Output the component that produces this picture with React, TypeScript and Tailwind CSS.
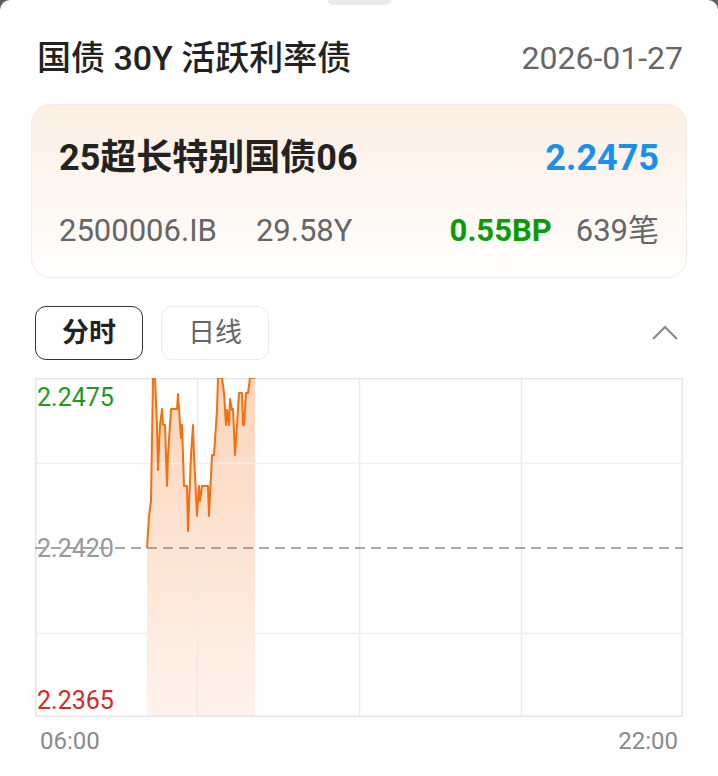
import React from 'react';

// price line, in chart coords (648 x 339)
const LINE: Array<[number, number]> = [
  [112, 170], [114, 138], [116, 123], [118, 0], [120, 0], [122, 47], [123, 92], [125, 47],
  [127, 31], [128, 47], [130, 47], [132, 108], [133, 77], [136, 31], [142, 31], [143, 16],
  [144, 31], [146, 60], [147, 47], [149, 108], [152, 108], [153, 153], [156, 77], [158, 47],
  [159, 77], [162, 138], [164, 108], [165, 123], [167, 108], [173, 108], [174, 138], [177, 77],
  [179, 77], [182, 32], [183, 0], [187, 0], [189, 15], [191, 47], [192, 32], [194, 47],
  [195, 21], [197, 32], [198, 31], [200, 77], [202, 47], [204, 15], [207, 15], [208, 47],
  [209, 47], [211, 15], [213, 15], [215, 0], [220, 0],
];

const W = 648;
const H = 339;

function Chart() {
  const pts = LINE.map(([x, y]) => `${x},${y}`).join(' ');
  const area = `${LINE[0][0]},${H} ${pts} ${LINE[LINE.length - 1][0]},${H}`;

  return (
    <div className="relative mx-[4px] h-[339px]">
      <svg width={W} height={H} className="absolute inset-0">
        <defs>
          <linearGradient id="fill" x1="0" y1="0" x2="0" y2="1">
            <stop offset="0%" stopColor="#fbd5bb" />
            <stop offset="100%" stopColor="#fff3ec" />
          </linearGradient>
        </defs>
        <polygon points={area} fill="url(#fill)" />
        {/* grid */}
        {[162, 324, 486].map((x) => (
          <line key={x} x1={x + 0.5} y1={0} x2={x + 0.5} y2={H} stroke="#ebebeb" strokeWidth="1.5" />
        ))}
        {[85, 255].map((y) => (
          <line key={y} x1={0} y1={y + 0.5} x2={W} y2={y + 0.5} stroke="#efefef" strokeWidth="1.5" />
        ))}
        <rect x={0.75} y={0.75} width={W - 1.5} height={H - 1.5} fill="none" stroke="#e6e6e6" strokeWidth="1.5" />
        <polyline points={pts} fill="none" stroke="#f2700f" strokeWidth="2" strokeLinejoin="round" />
        <line x1={0} y1={170} x2={W} y2={170} stroke="#8a8a8a" strokeWidth="1.5" strokeDasharray="10 6" />
      </svg>
      <div className="absolute left-[2px] top-[5px] text-[25px] leading-[30px] text-[#1c9a1c]">2.2475</div>
      <div className="absolute left-[2px] top-[156px] text-[25px] leading-[30px] text-[#999999]">2.2420</div>
      <div className="absolute left-[2px] top-[308px] text-[25px] leading-[30px] text-[#d12a2a]">2.2365</div>
    </div>
  );
}

export default function App() {
  return (
    <div className="h-[776px] w-[718px] bg-[#5f5f5f] font-['Roboto','Noto_Sans_CJK_SC',sans-serif]">
      <div className="flex h-full flex-col rounded-t-[10px] bg-white px-[31px]">
        <div className="flex justify-center">
          <div className="h-[5px] w-[63px] rounded-b-[5px] bg-[#ebebeb]" />
        </div>

        {/* header */}
        <div className="mt-[33px] flex items-center justify-between px-[6px] pr-[4px]">
          <span className="text-[34px] leading-[40px] font-medium text-[#222222]">国债 30Y 活跃利率债</span>
          <span className="text-[32px] leading-[40px] text-[#666666]">2026-01-27</span>
        </div>

        {/* bond card */}
        <div className="mt-[26px] h-[174px] rounded-[20px] border border-[#f0ece8] bg-gradient-to-b from-[#fdefe3] to-[#fffefd] px-[27px] pt-[31px]">
          <div className="flex items-center justify-between">
            <span className="text-[36px] leading-[44px] font-bold text-[#222222]">25超长特别国债06</span>
            <span className="text-[36px] leading-[44px] font-bold text-[#1890f0]">2.2475</span>
          </div>
          <div className="mt-[31px] flex items-center justify-between">
            <div className="flex items-center gap-[39px] text-[31px] leading-[40px] text-[#666666]">
              <span>2500006.IB</span>
              <span>29.58Y</span>
            </div>
            <div className="flex items-center gap-[24px] text-[31px] leading-[40px]">
              <span className="font-bold text-[#0b9a0b]">0.55BP</span>
              <span className="text-[#666666]">639笔</span>
            </div>
          </div>
        </div>

        {/* tabs */}
        <div className="mt-[28px] flex items-center justify-between px-[4px]">
          <div className="flex gap-[18px]">
            <div className="flex h-[54px] w-[108px] items-center justify-center rounded-[11px] border-[1.5px] border-[#333333] text-[27px] font-bold text-[#222222]">
              分时
            </div>
            <div className="flex h-[54px] w-[108px] items-center justify-center rounded-[11px] border-[1.5px] border-[#ececec] text-[27px] text-[#666666]">
              日线
            </div>
          </div>
          <svg width="28" height="16" viewBox="0 0 28 16" className="mr-[4px]">
            <polyline points="2,14 14,2 26,14" fill="none" stroke="#8c8c8c" strokeWidth="2.2" />
          </svg>
        </div>

        <div className="mt-[18px]">
          <Chart />
        </div>

        <div className="mt-[9px] flex justify-between px-[9px] text-[24px] leading-[30px] text-[#8a8a8a]">
          <span>06:00</span>
          <span>22:00</span>
        </div>
      </div>
    </div>
  );
}
